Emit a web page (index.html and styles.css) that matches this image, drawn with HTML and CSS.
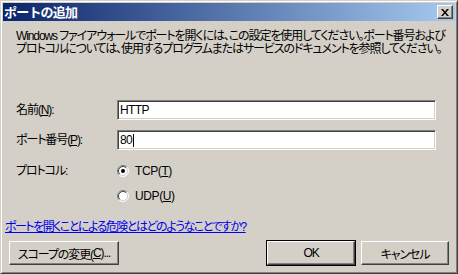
FILE: index.html
```html
<!DOCTYPE html>
<html lang="ja">
<head>
<meta charset="utf-8">
<title>ポートの追加</title>
<link rel="stylesheet" href="styles.css">
</head>
<body>
<div class="window">
  <div class="titlebar">
    <span class="title">ポートの追加</span>
    <span class="close"><svg width="8" height="7" viewBox="0 0 8 7"><path d="M0 0h2l2 2.5L6 0h2L5 3.5 8 7H6L4 4.5 2 7H0l3-3.5z" fill="#000"/></svg></span>
  </div>
  <div class="body">
    <p class="intro">Windows ファイアウォールでポートを開くには、この設定を使用してください。ポート番号および<br>プロトコルについては、使用するプログラムまたはサービスのドキュメントを参照してください。</p>
    <div class="form">
      <label class="lbl">名前(<u>N</u>):</label>
      <div class="input">HTTP</div>
      <label class="lbl">ポート番号(<u>P</u>):</label>
      <div class="input">80<span class="caret"></span></div>
      <div class="lbl proto">プロトコル:</div>
      <div class="radios">
        <div class="radio">
          <svg width="12" height="12" viewBox="0 0 12 12"><circle cx="6" cy="6" r="5" fill="#fff"/><path d="M2.1 9.9A5.5 5.5 0 0 1 9.9 2.1" fill="none" stroke="#808080"/><path d="M9.9 2.1A5.5 5.5 0 0 1 2.1 9.9" fill="none" stroke="#fff"/><path d="M2.8 9.2A4.5 4.5 0 0 1 9.2 2.8" fill="none" stroke="#404040"/><path d="M9.2 2.8A4.5 4.5 0 0 1 2.8 9.2" fill="none" stroke="#d4d0c8"/><circle cx="6" cy="6" r="2" fill="#000"/></svg>
          <span>TCP(<u>T</u>)</span>
        </div>
        <div class="radio">
          <svg width="12" height="12" viewBox="0 0 12 12"><circle cx="6" cy="6" r="5" fill="#fff"/><path d="M2.1 9.9A5.5 5.5 0 0 1 9.9 2.1" fill="none" stroke="#808080"/><path d="M9.9 2.1A5.5 5.5 0 0 1 2.1 9.9" fill="none" stroke="#fff"/><path d="M2.8 9.2A4.5 4.5 0 0 1 9.2 2.8" fill="none" stroke="#404040"/><path d="M9.2 2.8A4.5 4.5 0 0 1 2.8 9.2" fill="none" stroke="#d4d0c8"/></svg>
          <span>UDP(<u>U</u>)</span>
        </div>
      </div>
    </div>
    <a class="link" href="#">ポートを開くことによる危険とはどのようなことですか?</a>
    <div class="buttons">
      <div class="btn scope">スコープの変更(<u>C</u>)...</div>
      <span class="spacer"></span>
      <div class="btn default">OK</div>
      <div class="btn">キャンセル</div>
    </div>
  </div>
</div>
</body>
</html>
```

FILE: styles.css
```css
html, body {
  margin: 0;
  padding: 0;
}
body {
  width: 458px;
  height: 274px;
  overflow: hidden;
  font-family: "Liberation Sans", "Noto Sans CJK JP", sans-serif;
  font-size: 12px;
  letter-spacing: -1.1px;
  color: #000;
  font-feature-settings: "palt";
}
.window {
  box-sizing: border-box;
  width: 458px;
  height: 274px;
  background: #d4d0c8;
  border: 1px solid;
  border-color: #d4d0c8 #404040 #404040 #d4d0c8;
  box-shadow: inset 1px 1px #fff, inset -1px -1px #808080;
  padding: 2px;
  display: flex;
  flex-direction: column;
}
.titlebar {
  height: 18px;
  flex: none;
  background: linear-gradient(to right, #0a246a, #a6caf0);
  display: flex;
  align-items: center;
  justify-content: space-between;
  padding: 0 2px 0 1px;
}
.title {
  color: #fff;
  font-family: "Noto Sans CJK JP", sans-serif;
  font-weight: bold;
  font-size: 13px;
  letter-spacing: -0.8px;
  font-feature-settings: "palt" 0;
  line-height: 18px;
}
.close {
  box-sizing: border-box;
  width: 16px;
  height: 14px;
  background: #d4d0c8;
  border: 1px solid;
  border-color: #fff #404040 #404040 #fff;
  box-shadow: inset -1px -1px #808080;
  display: flex;
  align-items: center;
  justify-content: center;
}
.body {
  flex: 1;
  display: flex;
  flex-direction: column;
}
.intro {
  margin: 9px 0 0 13px;
  line-height: 13px;
  white-space: nowrap;
}
.form {
  margin: 44px 0 0 13px;
  display: grid;
  grid-template-columns: 101px 319px;
  row-gap: 10px;
  align-items: center;
}
.lbl {
  line-height: 14px;
}
.input {
  box-sizing: border-box;
  height: 20px;
  background: #fff;
  border: 1px solid;
  border-color: #808080 #fff #fff #808080;
  box-shadow: inset 1px 1px #404040, inset -1px -1px #d4d0c8;
  padding-left: 2px;
  line-height: 18px;
  letter-spacing: -0.6px;
  display: flex;
  align-items: center;
}
.caret {
  display: inline-block;
  width: 1px;
  height: 13px;
  background: #000;
  margin-left: 1px;
}
.proto {
  align-self: start;
  margin-top: 4px;
}
.radios {
  margin-top: 4px;
  display: flex;
  flex-direction: column;
  gap: 12px;
}
.radio {
  display: flex;
  align-items: center;
  gap: 6px;
  height: 13px;
  letter-spacing: -0.4px;
}
.radio svg {
  flex: none;
}
.link {
  margin: 19px 0 0 2px;
  color: #0000ee;
  line-height: 13px;
  letter-spacing: -1.5px;
  align-self: flex-start;
}
.buttons {
  margin: 7px 6px 0 6px;
  display: flex;
  gap: 6px;
}
.spacer {
  flex: 1;
}
.btn {
  box-sizing: border-box;
  height: 24px;
  width: 88px;
  background: #d4d0c8;
  border: 1px solid;
  border-color: #fff #404040 #404040 #fff;
  box-shadow: inset -1px -1px #808080;
  display: flex;
  align-items: center;
  justify-content: center;
}
.btn.scope {
  width: 110px;
}
.btn.default {
  outline: 1px solid #000;
  outline-offset: 0;
}
```
